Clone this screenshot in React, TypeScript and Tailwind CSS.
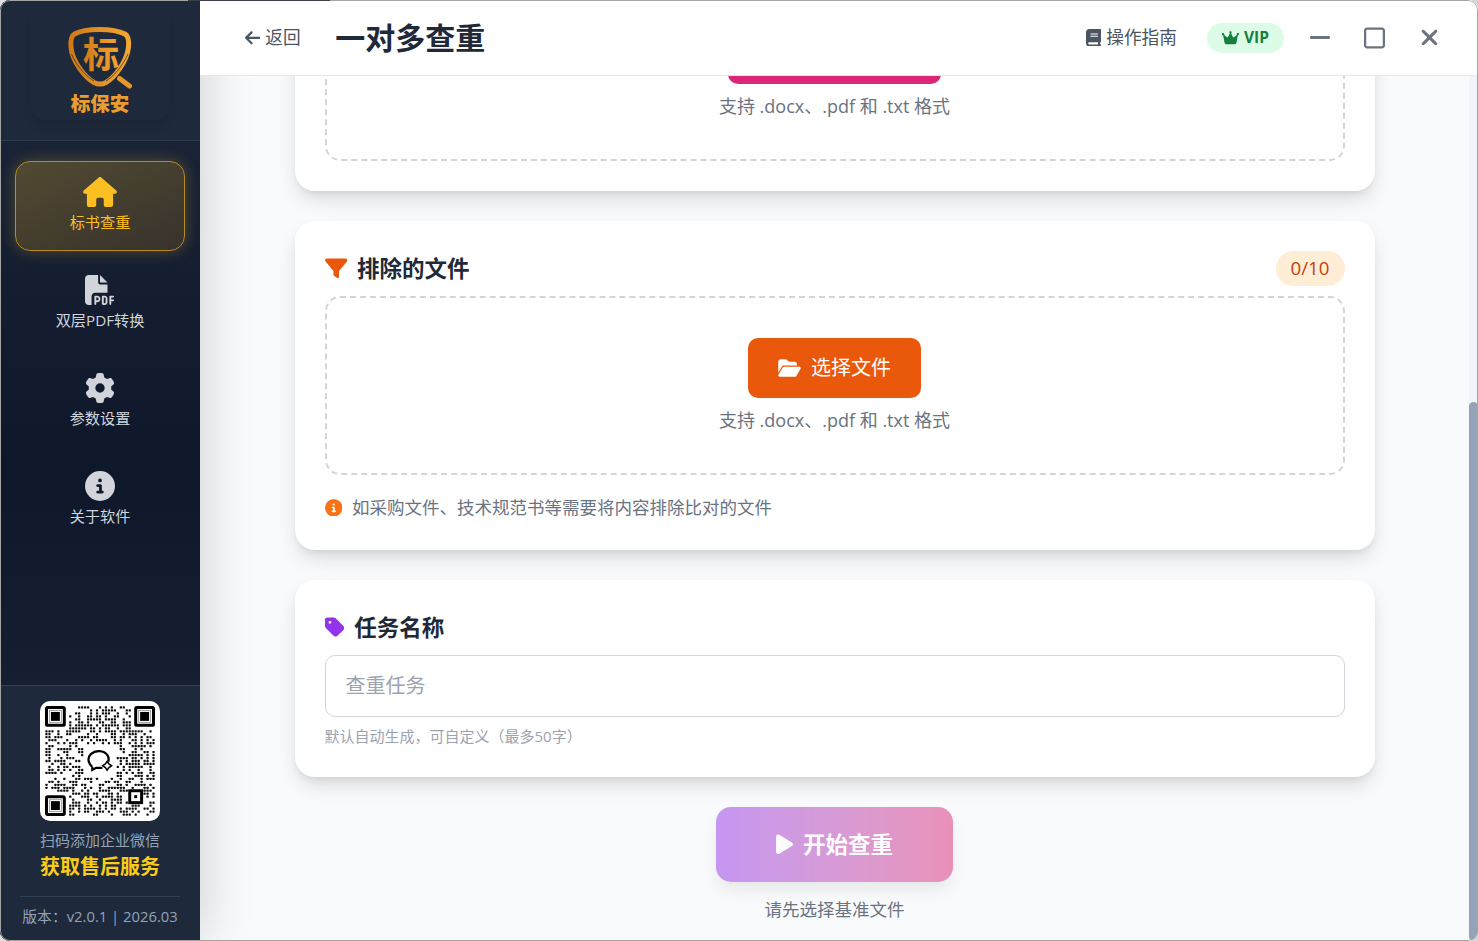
import React, { useState } from "react";
import type { IconType } from "react-icons";
import {
  FaArrowLeft,
  FaBook,
  FaCircleInfo,
  FaCrown,
  FaFilePdf,
  FaFilter,
  FaFolderOpen,
  FaGear,
  FaHouse,
  FaMinus,
  FaPlay,
  FaRegSquare,
  FaTag,
  FaXmark,
} from "react-icons/fa6";

interface NavItem {
  label: string;
  icon: IconType;
}

const navItems: NavItem[] = [
  { label: "标书查重", icon: FaHouse },
  { label: "双层PDF转换", icon: FaFilePdf },
  { label: "参数设置", icon: FaGear },
  { label: "关于软件", icon: FaCircleInfo },
];

const Logo: React.FC = () => (
  <svg width="140" height="120" viewBox="30 0 140 120" aria-label="标保安">
    <defs>
      <linearGradient id="gold" x1="0" y1="0" x2="1" y2="0">
        <stop offset="0" stopColor="#cf7a17" />
        <stop offset="1" stopColor="#f3a733" />
      </linearGradient>
    </defs>
    <path
      d="M99.500 29.500C89 29.500 80 31 74.500 34C71 36 70.500 41 71 47C72 62 86 78 94 82.500C98 84.600 102 84.600 106 82.500C114 78 127 62 128.500 47C129 41 128.500 36 125 34C119 31 110 29.500 99.500 29.500Z"
      fill="none"
      stroke="url(#gold)"
      strokeWidth="5"
    />
    <path d="M71.500 54C77 67 87 77 94 81M128 54C122 67 113 77 106 81" fill="none" stroke="#1f2937" strokeWidth="0.7" />
    <path d="M119.500 78.500L129.500 86" stroke="#e8962a" strokeWidth="5" strokeLinecap="round" />
    <text x="101" y="67.500" textAnchor="middle" fill="url(#gold)" className="font-['Noto_Sans_CJK_SC',sans-serif] text-[36px] font-bold">
      标
    </text>
    <text x="100" y="111" textAnchor="middle" fill="#eb9c2f" className="font-['Noto_Sans_CJK_SC',sans-serif] text-[19.5px] font-black">
      标保安
    </text>
  </svg>
);

const QR_SIZE = 37;

// true where the code keeps room for finder marks, the alignment mark and the centre logo
const isReserved = (x: number, y: number) =>
  (x < 8 && y < 8) ||
  (x > 28 && y < 8) ||
  (x < 8 && y > 28) ||
  (x > 12 && x < 24 && y > 12 && y < 24) ||
  (x > 27 && x < 33 && y > 27 && y < 33);

const buildDots = () => {
  const dots: { x: number; y: number }[] = [];
  let seed = 20263;
  for (let y = 0; y < QR_SIZE; y++) {
    for (let x = 0; x < QR_SIZE; x++) {
      seed = (seed * 1103515245 + 12345) % 2147483648;
      if (!isReserved(x, y) && seed / 2147483648 < 0.5) dots.push({ x, y });
    }
  }
  return dots;
};

const qrDots = buildDots();

const QrCode: React.FC = () => (
  <svg width="110" height="110" viewBox="0 0 37 37">
    {qrDots.map((d) => (
      <rect key={`${d.x}-${d.y}`} x={d.x + 0.12} y={d.y + 0.12} width="0.76" height="0.76" rx="0.2" fill="#111" />
    ))}
    {[
      [0, 0],
      [30, 0],
      [0, 30],
    ].map(([x, y]) => (
      <g key={`${x}-${y}`}>
        <rect x={x + 0.5} y={y + 0.5} width="6" height="6" rx="0.4" fill="#fff" stroke="#000" strokeWidth="1" />
        <rect x={x + 1.5} y={y + 1.5} width="4" height="4" fill="none" stroke="#999" strokeWidth="0.3" />
        <rect x={x + 2} y={y + 2} width="3" height="3" fill="#000" />
      </g>
    ))}
    <rect x="28.500" y="28.500" width="4" height="4" fill="#fff" stroke="#000" strokeWidth="1" />
    <rect x="30" y="30" width="1" height="1" fill="#000" />
    <path
      d="M15.900 20.500C14.300 19 14.300 17.300 15.400 16.200C17 14.700 19.800 14.800 21 16.500C21.500 17.300 21.500 18 21.300 18.700M15.900 20.500L15.900 21.500L17.200 20.800H19.300"
      fill="none"
      stroke="#000"
      strokeWidth="0.75"
    />
    <path d="M20.900 18.600L21.500 19.500L22.400 20.100L21.500 20.700L20.900 21.600L20.300 20.700L19.400 20.100L20.300 19.500Z" fill="#fff" stroke="#000" strokeWidth="0.5" />
  </svg>
);

const Sidebar: React.FC = () => {
  const [active, setActive] = useState("标书查重");

  return (
    <aside className="z-10 flex w-[200px] shrink-0 flex-col bg-linear-to-b from-[#1e293b] via-[#0f172a] to-[#1e293b] shadow-[0_0_50px_rgba(0,0,0,0.19)]">
      <div className="flex h-[141px] justify-center border-b border-[#2d3c50] bg-[#1e293b]">
        <div className="h-[120px] rounded-2xl shadow-[0_8px_12px_-3px_rgba(0,0,0,0.12)]">
          <Logo />
        </div>
      </div>

      <nav className="flex flex-1 flex-col gap-2 px-[15px] pt-5">
        {navItems.map(({ label, icon: Icon }) => (
          <button
            key={label}
            onClick={() => setActive(label)}
            className={
              active === label
                ? "flex h-[90px] flex-col items-center gap-1 rounded-[15px] border border-[#b98c22] bg-linear-to-br from-[#fbbf24]/25 to-[#f59e0b]/15 pt-[15px] text-[#fbbf24] shadow-[0_0_15px_rgba(251,191,36,0.28)]"
                : "flex h-[90px] flex-col items-center gap-1 rounded-[15px] border border-transparent pt-[15px] text-[#d1d5db]"
            }
          >
            <Icon size={30} className={label === "标书查重" ? "w-[34px]" : ""} />
            <span className="text-[15.2px] leading-[22px]">{label}</span>
          </button>
        ))}
      </nav>

      <div className="flex h-[256px] flex-col items-center border-t border-[#334155] bg-[#1e293b] pt-[15px]">
        <div className="flex size-[120px] items-center justify-center rounded-[10px] bg-white">
          <QrCode />
        </div>
        <p className="mt-2 text-[15px] leading-[23px] text-[#94a3b8]">扫码添加企业微信</p>
        <p className="mt-px text-xl leading-[28px] font-bold text-[#facc15]">获取售后服务</p>
        <div className="mt-[15px] w-40 border-t border-[#334155] pt-2">
          <p className="text-center text-[14.8px] leading-[23px] whitespace-nowrap text-[#94a3b8]">版本：v2.0.1 | 2026.03</p>
        </div>
      </div>
    </aside>
  );
};

const Header: React.FC = () => (
  <header className="z-20 flex h-[76px] shrink-0 items-center border-b border-[#e5e7eb] bg-white pl-[45px]">
    <button className="flex items-center gap-[5px] text-[17.7px] text-[#4b5563]">
      <FaArrowLeft className="w-[15.3px]" />
      <span>返回</span>
    </button>
    <h1 className="ml-[34.5px] text-[30px] font-bold text-[#1f2937]">一对多查重</h1>
    <div className="ml-auto flex items-center pr-[39px]">
      <button className="flex items-center gap-[5px] text-[17.7px] text-[#4b5563]">
        <FaBook className="w-[15.3px]" />
        <span>操作指南</span>
      </button>
      <span className="ml-[30px] flex h-[30px] w-[77px] items-center justify-center gap-[5px] rounded-full bg-[#dcfce7] text-[15.5px] font-bold text-[#15803d]">
        <FaCrown className="w-[17px]" />
        VIP
      </span>
      <button aria-label="最小化" className="ml-[25px] text-[#6b7280]">
        <FaMinus className="h-[25px] w-[22px]" />
      </button>
      <button aria-label="最大化" className="ml-[33px] text-[#6b7280]">
        <FaRegSquare className="h-6 w-[21px]" />
      </button>
      <button aria-label="关闭" className="ml-[35px] text-[#6b7280]">
        <FaXmark className="h-[25px] w-[19px]" />
      </button>
    </div>
  </header>
);

interface DropZoneProps {
  label?: string;
  color: string;
}

const DropZone: React.FC<DropZoneProps> = ({ label, color }) => (
  <div className="flex flex-col items-center rounded-[15px] border-2 border-dashed border-[#d1d5db] py-10">
    <button className={`flex h-[60px] items-center gap-[10px] rounded-[10px] text-xl text-white ${color}`}>
      <FaFolderOpen className="w-[23px]" />
      {label}
    </button>
    <p className="mt-[10px] text-[18px] leading-[25px] text-[#6b7280]">支持 .docx、.pdf 和 .txt 格式</p>
  </div>
);

interface CardProps {
  children: React.ReactNode;
}

const Card: React.FC<CardProps> = ({ children }) => (
  <section className="w-[1080px] shrink-0 rounded-[20px] bg-white p-[30px] shadow-[0_10px_20px_-3px_rgba(0,0,0,0.14),0_4px_8px_-4px_rgba(0,0,0,0.1)]">
    {children}
  </section>
);

const App: React.FC = () => {
  const [taskName, setTaskName] = useState("");

  return (
    <div className="h-[941px] w-[1478px] bg-linear-to-r from-[#dfe3dd] to-[#d5d5d5]">
      <div className="relative flex h-full overflow-hidden rounded-[10px] bg-[#f9fafb] font-['Open_Sans','Noto_Sans_CJK_SC',sans-serif]">
        <Sidebar />
        <div className="flex min-w-0 flex-1 flex-col">
          <Header />
          <main className="flex min-h-0 flex-1 flex-col items-center justify-end gap-[30px] overflow-hidden pr-[9px] pb-[19px]">
            <Card>
              <DropZone color="w-[213px] justify-center bg-[#db2777]" />
            </Card>

            <Card>
              <div className="mb-[10px] flex h-[35px] items-center justify-between">
                <h2 className="flex items-center gap-[10px] text-[22.5px] font-bold text-[#1f2937]">
                  <FaFilter className="w-[22.5px] text-[#ea580c]" />
                  排除的文件
                </h2>
                <span className="flex h-[35px] items-center rounded-full bg-[#ffedd5] px-[15px] text-[18.7px] text-[#c2410c]">0/10</span>
              </div>
              <DropZone label="选择文件" color="bg-[#ea580c] px-[30px]" />
              <p className="mt-5 flex items-center gap-[10px] text-[17.5px] leading-[25px] text-[#6b7280]">
                <FaCircleInfo className="text-[#f97316]" />
                如采购文件、技术规范书等需要将内容排除比对的文件
              </p>
            </Card>

            <Card>
              <h2 className="mb-[10px] flex h-[35px] items-center gap-[10px] text-[22.5px] font-bold text-[#1f2937]">
                <FaTag className="w-[19.7px] text-[#9333ea]" />
                任务名称
              </h2>
              <input
                value={taskName}
                maxLength={50}
                onChange={(e) => setTaskName(e.target.value)}
                placeholder="查重任务"
                className="block h-[62px] w-full rounded-[10px] border border-[#d1d5db] px-5 pb-0.5 text-xl placeholder:text-[#9ca3af]"
              />
              <p className="mt-[8px] text-[15px] leading-[22px] text-[#9ca3af]">默认自动生成，可自定义（最多50字）</p>
            </Card>

            <div className="flex flex-col items-center">
              <button
                disabled
                className="flex h-[75px] w-[237px] items-center justify-center gap-[10px] rounded-[15px] bg-linear-to-r from-[#9333ea] to-[#db2777] text-[22.5px] font-bold text-white opacity-50 shadow-[0_10px_15px_-3px_rgba(0,0,0,0.15)]"
              >
                <FaPlay className="w-[17px]" />
                开始查重
              </button>
              <p className="mt-[15px] text-[17.5px] leading-[25px] text-[#6b7280]">请先选择基准文件</p>
            </div>
          </main>
        </div>

        {/* scrollbar */}
        <div className="absolute top-[76px] right-0 bottom-0 w-[9px] bg-[#f1f5f9]">
          <div className="mt-[326px] h-[539px] rounded-[5px] bg-[#94a3b8]" />
        </div>
        {/* window frame */}
        <div className="pointer-events-none absolute inset-0 z-30 rounded-[10px] border border-[#a3a5a3]" />
        <div className="absolute top-0 left-[188px] z-30 h-px w-[142px] bg-[#3f404c]" />
      </div>
    </div>
  );
};

export default App;
